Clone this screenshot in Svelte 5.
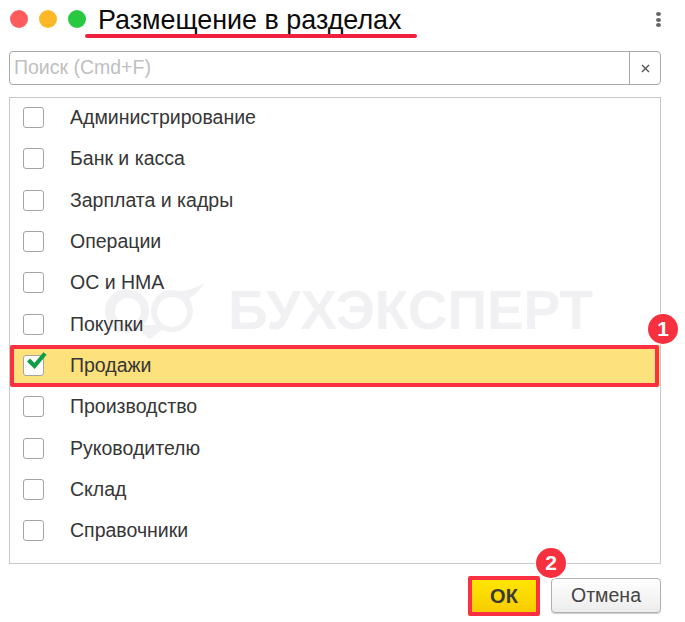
<script>
  const items = ['Администрирование','Банк и касса','Зарплата и кадры','Операции','ОС и НМА','Покупки','Продажи','Производство','Руководителю','Склад','Справочники'];
</script>

<div class="win">
  <header class="head">
    <div class="lights"><i class="r"></i><i class="y"></i><i class="g"></i></div>
    <h1>Размещение в разделах</h1>
    <div class="more"><i></i><i></i><i></i></div>
    <span class="underline"></span>
  </header>

  <div class="search">
    <div class="input">Поиск (Cmd+F)</div>
    <div class="clear">
      <svg width="9" height="9" viewBox="0 0 9 9"><path d="M1 1l7 7M8 1l-7 7" stroke="#555" stroke-width="1.4" fill="none"/></svg>
    </div>
  </div>

  <div class="list">
    <div class="mark">
      <svg width="105" height="60" viewBox="100 280 105 60">
        <circle cx="127" cy="311" r="22" fill="#f1f1f3"/>
        <circle cx="172" cy="311" r="21" fill="#f1f1f3"/>
        <path d="M150 339L132 325L168 325Z" fill="#f1f1f3"/>
        <path d="M204 283C197 295 187 301 178 301L163 292C180 292 192 291 204 283Z" fill="#f1f1f3"/>
        <circle cx="128" cy="311" r="13" fill="#fff"/>
        <circle cx="172" cy="312" r="15" fill="#fff"/>
      </svg>
      <span>БУХЭКСПЕРТ</span>
    </div>
    <div class="rows">
      {#each items as item, i}
        <div class="row" class:sel={i === 6}>
          <span class="box">
            {#if i === 6}
              <svg class="tick" width="26" height="20" viewBox="0 0 26 20"><path d="M5.5 8L11.5 14L22 1.5" stroke="#0f9d45" stroke-width="4.2" fill="none"/></svg>
            {/if}
          </span>
          <span class="label">{item}</span>
        </div>
      {/each}
    </div>
    <span class="badge b1">1</span>
  </div>

  <footer class="foot">
    <button class="ok">ОК<span class="badge b2">2</span></button>
    <button class="cancel">Отмена</button>
  </footer>
</div>

<style>
  :global(body) { margin: 0; background: #fff; }
  .win {
    width: 685px; height: 622px; box-sizing: border-box; overflow: hidden;
    padding: 0 24px 0 9px; font-family: "Liberation Sans", Arial, sans-serif; background: #fff;
  }
  .head { position: relative; display: flex; align-items: flex-start; height: 51px; margin-left: 1px; }
  .lights { display: flex; gap: 11px; margin: 10px 12px 0 0; }
  .lights i { width: 18px; height: 18px; border-radius: 50%; display: block; }
  .r { background: #fe5c5c; } .y { background: #fdb827; } .g { background: #28c940; }
  h1 { margin: 0; padding-top: 5px; font-size: 26.9px; font-weight: 400; color: #0b0b0b; flex: 1; }
  .more { display: flex; flex-direction: column; gap: 1.5px; margin-top: 12px; width: 5px; }
  .more i { width: 5px; height: 4px; border-radius: 50%; background: #666; display: block; }
  .underline { position: absolute; left: 75px; top: 33.5px; width: 332px; height: 4px; background: #f0203f; border-radius: 2px; }

  .search {
    display: flex; height: 34px; box-sizing: border-box; border: 1.5px solid #a9a9a9;
    border-radius: 4px; background: #fff;
  }
  .input { flex: 1; color: #c0c0c0; font-size: 19.5px; line-height: 30px; padding-left: 4px; }
  .clear { width: 30px; border-left: 1.5px solid #a9a9a9; display: flex; align-items: center; justify-content: center; }

  .list {
    position: relative; margin-top: 12px; height: 467px; box-sizing: border-box;
    border: 1px solid #c8c8c8;
  }
  .mark { position: absolute; left: 90px; top: 182px; display: flex; align-items: flex-start; gap: 23px; }
  .mark span { font-size: 55px; font-weight: 700; color: #f1f1f3; line-height: 1; margin-top: 3px; }
  .rows { position: relative; margin-top: -1px; display: flex; flex-direction: column; }
  .row {
    position: relative; flex: none; height: 41.3px; display: flex; align-items: center; padding-left: 13px;
    box-sizing: border-box;
  }
  .box {
    position: relative; width: 21px; height: 21px; box-sizing: border-box; border: 1.5px solid #a5a5a5;
    border-radius: 3px; background: #fff; flex: none;
  }
  .tick { position: absolute; left: -1.5px; top: -3.5px; }
  .label { margin-left: 26px; font-size: 19.5px; color: #363636; }
  .row.sel { background: #fde17c; }
  .row.sel::after {
    content: ""; position: absolute; left: 0; right: 1px; top: 0; bottom: -1px;
    border: 4px solid #fb3040; border-radius: 2px;
  }
  .badge {
    position: absolute; width: 30px; height: 30px; border-radius: 50%; background: #f6303f; color: #fff;
    font: 700 21px/30px "Liberation Sans", Arial, sans-serif; text-align: center; box-shadow: 0 0 0 1px #fff;
  }
  .b1 { left: 638px; top: 216px; }
  .b2 { right: -30px; top: -32px; }

  .foot { display: flex; justify-content: flex-end; align-items: flex-start; gap: 11px; margin-top: 12px; }
  button { font-family: inherit; padding: 0; box-sizing: border-box; }
  .ok {
    position: relative; width: 72px; height: 40px; background: linear-gradient(#ffe600, #f8cc00); border: 4px solid #fb3040;
    border-radius: 2px; color: #3a3a3a; font-weight: 700; font-size: 20px;
  }
  .cancel {
    width: 110px; height: 35px; margin-top: 2px; background: linear-gradient(#fff, #ececec); border: 1px solid #b0b0b0; border-radius: 4px;
    color: #444; font-size: 19.5px; box-shadow: 0 1px 1px #ccc;
  }
</style>
